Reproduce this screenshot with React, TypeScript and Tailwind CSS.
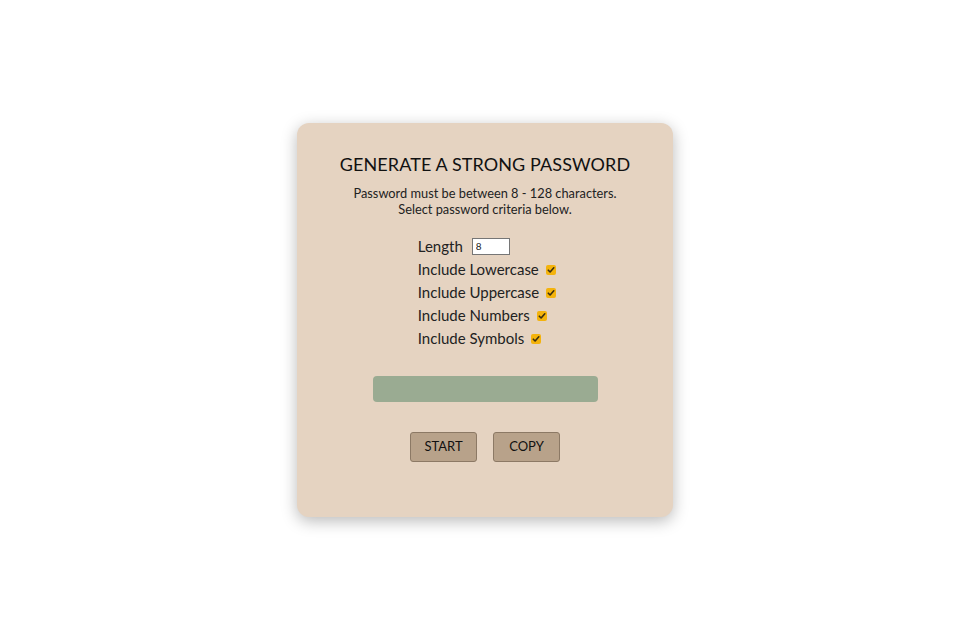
import React from "react";

function Check() {
  return (
    <span className="inline-flex w-[10px] h-[10px] rounded-[2px] bg-[#f4b30c] items-center justify-center ml-[7px]">
      <svg width="8" height="8" viewBox="0 0 8 8">
        <path d="M1.3 4.2 L3.1 6 L6.8 1.8" fill="none" stroke="#3a2e10" strokeWidth="1.6" strokeLinecap="round" strokeLinejoin="round" />
      </svg>
    </span>
  );
}

export default function App() {
  const rows = ["Include Lowercase", "Include Uppercase", "Include Numbers", "Include Symbols"];
  return (
    <div className="min-h-[621px] bg-white flex justify-center pt-[123px] text-black" style={{ fontFamily: "Lato, 'Noto Sans', sans-serif" }}>
      <div className="w-[376px] h-[394px] bg-[#e5d3c1] rounded-[12px] shadow-[0_4px_16px_rgba(0,0,0,0.28)] flex flex-col items-center pt-[29px]">
        <h1 className="text-[18px] leading-[24px] tracking-[0.1px] text-[#111]">GENERATE A STRONG PASSWORD</h1>
        <p className="mt-[9px] text-[12.8px] leading-[16px] text-center text-[#222]">
          Password must be between 8 - 128 characters.
          <br />
          Select password criteria below.
        </p>
        <div className="mt-[18px] flex flex-col items-start text-[15px] leading-[23px] text-[#222] pl-[4px]">
          <div className="flex items-center">
            <span>Length</span>
            <input
              type="text"
              defaultValue="8"
              className="ml-[9px] w-[38px] h-[17px] border border-[#767676] bg-white text-[10px] px-[3px] outline-none"
            />
          </div>
          {rows.map((r) => (
            <div key={r} className="flex items-center">
              <span>{r}</span>
              <Check />
            </div>
          ))}
        </div>
        <div className="mt-[26px] w-[225px] h-[26px] rounded-[4px] bg-[#9aab92]" />
        <div className="mt-[30px] flex gap-[16px]">
          <button className="w-[67px] h-[30px] rounded-[3px] bg-[#b8a28a] border border-[#8c7965] text-[13px] text-[#111]">START</button>
          <button className="w-[67px] h-[30px] rounded-[3px] bg-[#b8a28a] border border-[#8c7965] text-[13px] text-[#111]">COPY</button>
        </div>
      </div>
    </div>
  );
}
